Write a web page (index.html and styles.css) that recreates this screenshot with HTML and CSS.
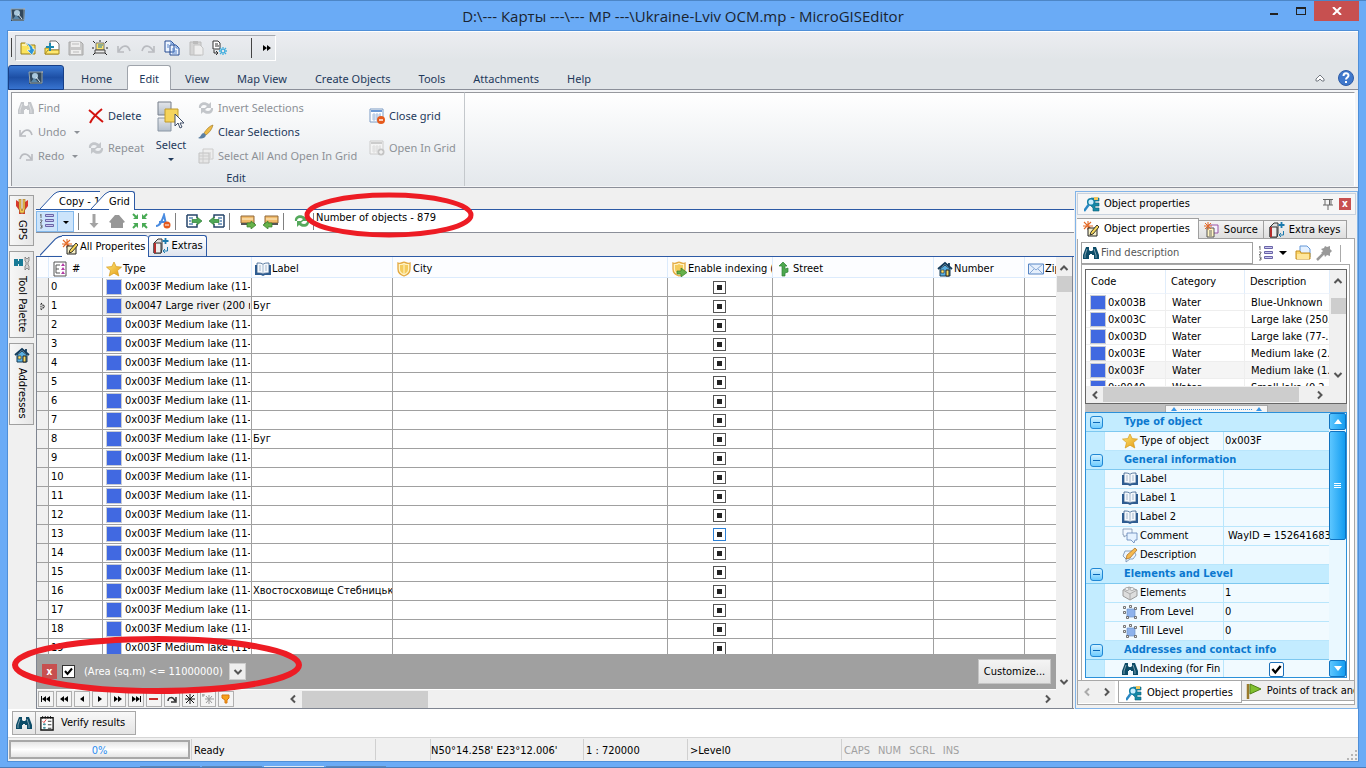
FILE: index.html
```html
<!DOCTYPE html>
<html lang="en">
<head>
<meta charset="utf-8">
<title>MicroGISEditor</title>
<link rel="stylesheet" href="styles.css">
</head>
<body>
<svg class="defs" aria-hidden="true">
  <defs>
    <linearGradient id="gold" x1="0" y1="0" x2="1" y2="1"><stop offset="0" stop-color="#ffe97a"/><stop offset="1" stop-color="#e39a12"/></linearGradient>
    <linearGradient id="sheet" x1="0" y1="0" x2="0" y2="1"><stop offset="0" stop-color="#e4e6ea"/><stop offset="1" stop-color="#b4bfcc"/></linearGradient>
  </defs>
  <symbol id="app" viewBox="0 0 16 16"><path d="M1 2h14l-1 12H1z" fill="#31485c"/><path d="M1 2h13v11H2z" fill="none" stroke="#95a5ae"/><circle cx="7" cy="6" r="3" fill="#a9c8dc"/><path d="M3 12l3-4 4 4z" fill="#5a88aa"/><path d="M8 7l4 5" stroke="#dbe9f1"/><path d="M13 2l2-1v2" fill="#aaa"/></symbol>
  <symbol id="folderdown" viewBox="0 0 16 16"><path d="M1 14V3h5l1 2h8v9z" fill="#fbe45d" stroke="#99801c"/><path d="M2 5h5" stroke="#fff"/><path d="M5 3c3 1 5 4 5 7H7l5 5 3-6h-2C13 6 9 3 5 3z" fill="#2a94d8" stroke="#fff" stroke-width=".6"/></symbol>
  <symbol id="folderadd" viewBox="0 0 16 16"><path d="M1 14V8h4l1-5h8v11z" fill="#fbe45d" stroke="#a98b20"/><path d="M6 1h6l3 3v6H6z" fill="#fff" stroke="#707070"/><path d="M1 14l3-4h11v4z" fill="#ffe970" stroke="#a98b20"/><path d="M6 3v8M2 7h8" stroke="#1b88ad" stroke-width="2"/></symbol>
  <symbol id="disk" viewBox="0 0 16 16"><path d="M1 2h12l2 2v11H1z" fill="#c8c8c8" stroke="#a8a8a8"/><path d="M3 2h9v5H3zM3 10h10v4H3z" fill="#eee"/><path d="M4 4h7M5 12h6" stroke="#bbb"/></symbol>
  <symbol id="alert" viewBox="0 0 16 16"><path d="M1 1l2 2M15 1l-2 2M0 8h2M14 8h2M1 15l2-2M15 15l-2-2M8 0v2" stroke="#222"/><path d="M4 3h8v7H4z" fill="#ffe66b" stroke="#777"/><path d="M6 5h5M6 7h4" stroke="#1c75b0"/><path d="M3 10h10v3H3z" fill="#e8e8e8" stroke="#444"/></symbol>
  <symbol id="undo" viewBox="0 0 16 16"><path d="M2 6v6h6M3 11c3-6 9-7 11 0" fill="none" stroke="#b9bbc0" stroke-width="1.6"/></symbol>
  <symbol id="redo" viewBox="0 0 16 16"><path d="M14 6v6H8M13 11C10 5 4 4 2 11" fill="none" stroke="#b9bbc0" stroke-width="1.6"/></symbol>
  <symbol id="copy" viewBox="0 0 16 16"><path d="M1 1h6l3 3v8H1zM6 5h6l3 3v7H6z" fill="#eef5ff" stroke="#244a92"/><path d="M7 1v3h3M12 5v3h3M3 5h2M3 7h2M8 9h3M8 11h5M8 13h5" fill="none" stroke="#5685ce"/></symbol>
  <symbol id="paste" viewBox="0 0 16 16"><path d="M2 2h11v13H2z" fill="#d5d5d5" stroke="#bbb"/><path d="M5 1h5v3H5z" fill="#bbb"/><path d="M6 5h6l3 3v7H6z" fill="#eee" stroke="#c4c4c4"/></symbol>
  <symbol id="docgear" viewBox="0 0 16 16"><path d="M1 1h5l2 2v6H1z" fill="#fff" stroke="#333"/><path d="M3 4h3M3 6h4M2 10v3h3M4 11l2 2-2 2" fill="none" stroke="#333"/><path d="M11 7v3M11 12v3M7 11h3M12 11h3M8 8l2 2M14 8l-2 2M8 14l2-2M14 14l-2-2" stroke="#43aede" stroke-width="1.3"/></symbol>
  <symbol id="binoc" viewBox="0 0 16 16"><path d="M3 2h3v3l1 1h2l1-1V2h3l3 8v4h-5v-4H9v-1H7v1H6v4H0v-4z" fill="currentColor"/><path d="M4 4L2 10v3M11 4l2 6v3" stroke="#fff" stroke-opacity=".45" fill="none"/></symbol>
  <symbol id="cross" viewBox="0 0 16 16"><path d="M1 2c5 4 9 8 14 12M14 1C9 5 5 9 2 15" fill="none" stroke="#d3130e" stroke-width="2"/></symbol>
  <symbol id="cycle" viewBox="0 0 16 16"><path d="M1 8C0 3 6 0 11 4l2-2v6H7l2-2C6 4 3 5 3 8zM15 8c1 5-5 8-10 4l-2 2V8h6l-2 2c3 2 6 1 6-2z" fill="currentColor"/></symbol>
  <symbol id="select" viewBox="0 0 28 32"><path d="M1 1h13v13H1z" fill="url(#sheet)" stroke="#777f8a"/><path d="M1 17h13v13H1z" fill="url(#sheet)" stroke="#8a96a4"/><path d="M8 8h13v13H8z" fill="#f5d45c" stroke="#c09a2c"/><path d="M18 13v12l3-3 2 5 2-1-2-4h4z" fill="#fff" stroke="#3e4d66"/></symbol>
  <symbol id="brush" viewBox="0 0 16 16"><path d="M15 1c-4 1-7 5-9 8l2 2c4-3 6-6 7-10z" fill="#eebb45" stroke="#9c7420" stroke-width=".6"/><path d="M6 9c-3 0-2 3-6 5 3 1 7 1 8-3z" fill="#5b7fa3"/></symbol>
  <symbol id="sheets" viewBox="0 0 16 16"><path d="M5 1h10v10H5z" fill="#eee" stroke="#ccc"/><path d="M1 5h10v10H1z" fill="#e6e6e6" stroke="#c2c2c2"/><path d="M1 8h10M1 11h10M5 5v10M12 4v6" stroke="#ccc"/></symbol>
  <symbol id="gridx" viewBox="0 0 16 16"><path d="M1 1h13v13H1z" fill="#fff" stroke="#7b9bc4"/><path d="M2 3h11" stroke="#6d9ad6" stroke-width="2"/><path d="M3 7h9M3 9h9M3 11h9M5 5v8M8 5v8M11 5v8" stroke="#a9c0e0"/><circle cx="12" cy="12" r="4" fill="#e65a1c"/><path d="M10 12h4" stroke="#fff" stroke-width="1.4"/></symbol>
  <symbol id="gridplus" viewBox="0 0 16 16"><path d="M1 1h13v13H1z" fill="#f4f4f4" stroke="#ccc"/><path d="M2 3h11" stroke="#ccc" stroke-width="2"/><path d="M3 7h9M3 9h9M3 11h9M5 5v8M8 5v8M11 5v8" stroke="#ddd"/><circle cx="12" cy="12" r="3.5" fill="#c4c4c4"/><path d="M10 12h4M12 10v4" stroke="#fff"/></symbol>
  <symbol id="help" viewBox="0 0 16 16"><circle cx="8" cy="8" r="7.5" fill="#3f78cc" stroke="#2e5ca6"/><path d="M5.5 6c0-3.500 5-3.500 5-.5 0 2-2.500 2-2.500 4M8 11v2" fill="none" stroke="#fff" stroke-width="2"/></symbol>
  <symbol id="numlist" viewBox="0 0 16 16"><path d="M2 1v4M1 2h1M1 7h2v1l-2 2h2M1 12h2v3H1M2 13.500h1" fill="none" stroke="#555" stroke-width=".8"/><path d="M6.500 1.500h8v2h-8zM6.500 6.500h8v2h-8zM6.500 11.500h8v2h-8z" fill="#c9c7ee" stroke="#6a64a8"/></symbol>
  <symbol id="arrowdn" viewBox="0 0 16 16"><path d="M6.500 1h3v9h3L8 15l-4.500-5h3z" fill="#a3a3a3"/></symbol>
  <symbol id="ghouse" viewBox="0 0 16 16"><path d="M0 9l6-7h4l6 7-2 1v5H2v-5z" fill="#979797"/></symbol>
  <symbol id="shrink" viewBox="0 0 16 16"><path d="M1 1l3 3M15 1l-3 3M1 15l3-3M15 15l-3-3" stroke="#48aa54" stroke-width="2"/><path d="M6 1v5H1zM10 1v5h5zM6 15v-5H1zM10 15v-5h5z" fill="#48aa54"/></symbol>
  <symbol id="aminus" viewBox="0 0 16 16"><path d="M1 13c4 0 6-5 8-11l2 9M4 9h6" fill="none" stroke="#4a8ce0" stroke-width="2"/><circle cx="12" cy="12" r="3.500" fill="#e65a1c"/><path d="M10 12h4" stroke="#fff"/></symbol>
  <symbol id="rowright" viewBox="0 0 16 16"><path d="M1 2h10v3M11 11v3H1M1 2v12" fill="none" stroke="#27466b" stroke-width="1.500"/><path d="M3 5h4M3 8h2M3 11h4" stroke="#5a86b4" stroke-width="1.500"/><path d="M6 6.500h5V4l5 4-5 4V9.500H6z" fill="#4ea956" stroke="#2f7d38" stroke-width=".7"/></symbol>
  <symbol id="truck" viewBox="0 0 16 16"><path d="M1 3h13v7H1z" fill="#f1bb6a" stroke="#90683a"/><path d="M1 10h14v2H1z" fill="#555"/><path d="M2 6h11" stroke="#fff1d1"/><path d="M7 10h4V8l5 4-5 4v-2H7z" fill="#66b14a" stroke="#34802a" stroke-width=".7"/></symbol>
  <symbol id="wand" viewBox="0 0 16 16"><path d="M5 0v9M0 5h10M1 1l7 7M8 1L1 8" stroke="#e46a26" stroke-width="1.100"/><path d="M5 7h9v8H5z" fill="#f6f0c8" stroke="#222"/><path d="M14 4l2 2-6 7-3 1 1-3z" fill="#f7d75b" stroke="#222" stroke-width=".9"/></symbol>
  <symbol id="bookplus" viewBox="0 0 16 16"><path d="M1 5l4-4h4v10l-1 4H1z" fill="#ddd" stroke="#333"/><path d="M1 5h7v10H1z" fill="#ececec" stroke="#333"/><path d="M2 5v10" stroke="#b52d2d" stroke-width="2"/><path d="M12.500 0v6M9.500 3h6" stroke="#1b7aae" stroke-width="1.800"/><path d="M14.500 9v4h-4M12 11l-2 2 2 2" fill="none" stroke="#1b7aae"/></symbol>
  <symbol id="tree" viewBox="0 0 16 16"><path d="M2 1h12v14H2z" fill="#fff" stroke="#555"/><path d="M8 4H4v8h4M4 8h3" fill="none" stroke="#555"/><path d="M11 2l2 3h-4zM11 6l2 3h-4zM11 10l2 3h-4z" fill="#b23aa5"/></symbol>
  <symbol id="star" viewBox="0 0 16 16"><path d="M8 1l2.200 4.600 5.300.5-4 3.500 1.300 5.400L8 12.200 3.200 15l1.300-5.400-4-3.500 5.300-.5z" fill="url(#gold)" stroke="#d59b1b" stroke-width=".7"/></symbol>
  <symbol id="book" viewBox="0 0 16 16"><path d="M0 4v10h6l2 1 2-1h6V4z" fill="#2d5c92"/><path d="M2 2c3 0 5 0 6 1.500C9 2 11 2 14 2v10c-3 0-5 0-6 1-1-1-3-1-6-1z" fill="#f5f8fc" stroke="#365e8c" stroke-width=".8"/><path d="M8 4v9M4 5h2M4 7h2M4 9h2M10 5h2M10 7h2M10 9h2" stroke="#8ea6c0" stroke-width=".8"/></symbol>
  <symbol id="shield" viewBox="0 0 16 16"><path d="M2 2c3 1 4 0 6-1 2 1 3 2 6 1v6c0 4-3 6-6 7-3-1-6-3-6-7z" fill="#fff3c4" stroke="#e3a83e" stroke-width="1.300"/><path d="M4 4c2 0 3 0 4-1 1 1 2 1 4 1v4c0 3-2 4-4 5-2-1-4-2-4-5z" fill="#f4cb5c"/><path d="M8 3v10" stroke="#fff6d0"/></symbol>
  <symbol id="shieldgo" viewBox="0 0 16 16"><path d="M2 2c3 1 4 0 6-1 2 1 3 2 6 1v6c0 4-3 6-6 7-3-1-6-3-6-7z" fill="#fff3c4" stroke="#e3a83e" stroke-width="1.300"/><path d="M4 4c2 0 3 0 4-1 1 1 2 1 4 1v4c0 3-2 4-4 5-2-1-4-2-4-5z" fill="#f4cb5c"/><path d="M6 10h4V7l6 4.500-6 4.500v-3H6z" fill="#66b14a" stroke="#34802a" stroke-width=".7"/></symbol>
  <symbol id="street" viewBox="0 0 16 16"><path d="M6 15V5H3l4-4 4 4H9v3l3-1v4l-3 1v3z" fill="#4da84f" stroke="#2f8137" stroke-width=".7"/></symbol>
  <symbol id="house" viewBox="0 0 16 16"><path d="M1 8l7-6 7 6M12 2v4" fill="none" stroke="#123a5a" stroke-width="1.800"/><path d="M3 8l5-4 5 4v7H3z" fill="#5aafe0" stroke="#173c56"/><path d="M4 9h3v3H4z" fill="#ffe873" stroke="#222" stroke-width=".6"/><path d="M9 9h3v6H9z" fill="#f7dc63" stroke="#222"/></symbol>
  <symbol id="mail" viewBox="0 0 16 16"><path d="M.5 3h15v10H.5z" fill="#e5effc" stroke="#5685c4"/><path d="M1 3l7 6 7-6M1 13l5-5M15 13l-5-5" fill="none" stroke="#86a8d6"/></symbol>
  <symbol id="props" viewBox="0 0 16 16"><path d="M7 2h8v3h-4v2h4v3h-4v2h4v3H9v-3l-3-3V4z" fill="#158aa5" stroke="#0f6078" stroke-width=".6"/><circle cx="7" cy="6" r="3.300" fill="#cbefff" stroke="#1380a4" stroke-width="1.500"/><path d="M4.500 9L0 15" stroke="#2a88c4" stroke-width="2.500"/><path d="M10 1h4v3h-4z" fill="#f2c75c"/></symbol>
  <symbol id="source" viewBox="0 0 16 16"><path d="M5 3h10v8H5z" fill="#f5f2ff" stroke="#9b54a4"/><path d="M4 6h7v9H4z" fill="#fff5c3" stroke="#555"/><path d="M6 9h3M6 11h3M6 13h3" stroke="#666"/><path d="M5 0v8M1 4h8M2 1l6 6M8 1L2 7" stroke="#e46a26"/></symbol>
  <symbol id="opendoc" viewBox="0 0 16 16"><path d="M5 1h7l3 3v8H5z" fill="#e5f1ff" stroke="#6598d8"/><path d="M1 14V6h4l1 2h9v6z" fill="#fbd466" stroke="#c48d20"/><path d="M2 9h12v5H2z" fill="#ffe69a"/></symbol>
  <symbol id="pipette" viewBox="0 0 16 16"><path d="M1 15l7-7" stroke="#999" stroke-width="2.500"/><path d="M5 4l3-1 1-2 2 1 3-1v3l2 2-2 2v3l-3-1-2 2-1-3-3-1 2-2z" fill="#999"/></symbol>
  <symbol id="pin" viewBox="0 0 12 12"><path d="M1 1.500h10M3 2v5M9 2v5M7.500 2v5M1 7h10M6 7v5" fill="none" stroke="#666"/></symbol>
  <symbol id="bubble" viewBox="0 0 16 16"><path d="M1 1h9v6H5L2 9V7H1z" fill="#f2f8ff" stroke="#7d93ae" stroke-width=".8"/><path d="M5 5h10v7h-2l-1 3-3-3H5z" fill="#e5f2ff" stroke="#5f84b8" stroke-width=".8"/></symbol>
  <symbol id="note" viewBox="0 0 16 16"><path d="M3 4h9l2 4-3 4H8l-4 3v-3L1 9z" fill="#edf5ff" stroke="#6f8db3" stroke-width=".8"/><path d="M13 1l2 2-7 8-4 1 1-4z" fill="#f6b94f" stroke="#a1681e" stroke-width=".7"/></symbol>
  <symbol id="brick" viewBox="0 0 16 16"><path d="M1 5l6-3 8 3v6l-7 4-7-4z" fill="#ddd" stroke="#999"/><path d="M1 5l7 4 7-4M8 9v6" fill="none" stroke="#aaa"/><ellipse cx="5" cy="4" rx="2" ry="1.500" fill="#f5f5f5" stroke="#999" stroke-width=".7"/><ellipse cx="10" cy="4" rx="2" ry="1.500" fill="#f5f5f5" stroke="#999" stroke-width=".7"/></symbol>
  <symbol id="level" viewBox="0 0 16 16"><path d="M5 5h8v8H5z" fill="#8eb2ec" stroke="#6f92c8" stroke-width=".7"/><path d="M1.500 2.500h2v2h-2zM7.500 1.500h2v2h-2zM12.500 3.500h2v2h-2zM1.500 7.500h2v2h-2zM4.500 12.500h2v2h-2zM12.500 12.500h2v2h-2z" fill="#eee" stroke="#555" stroke-width=".8"/></symbol>
  <symbol id="flag" viewBox="0 0 16 16"><path d="M2 1v15" stroke="#9a7a2c" stroke-width="2.500"/><path d="M4 1l11 5-11 5z" fill="#80c02e" stroke="#518216"/></symbol>
  <symbol id="checklist" viewBox="0 0 16 18"><path d="M1 3h14v14H1z" fill="#fff" stroke="#111" stroke-width="1.500"/><path d="M3 1v3M6 1v3M9 1v3M12 1v3" stroke="#111"/><path d="M3 7l1.500 1.500L7 5" fill="none" stroke="#d22"/><path d="M4 10h2v1H4zM4 14h2v1H4z" stroke="#278" fill="none"/><path d="M9 7h4M9 11h4M9 15h4" stroke="#222"/></symbol>
  <symbol id="gps" viewBox="0 0 12 16"><path d="M0 1l3 2v6l3 6 3-6V3l3-2v6l-3 4v4H3v-4L0 7z" fill="#d9382c"/><path d="M3 0h2v9l1 3 1-3V0h2v9l-1 5H4L3 9z" fill="#f4cb54" stroke="#96611e" stroke-width=".6"/></symbol>
  <symbol id="palette" viewBox="0 0 16 16"><path d="M0 4h4v2h1V4h4v7H5V9H4v2H0z" fill="#187a96"/><path d="M11 2l2 2 2-2v4l-1 1v3l1 1v4l-2-2-2 2v-4l1-1V7l-1-1z" fill="#d4d4d4" stroke="#777" stroke-width=".8"/></symbol>
  <symbol id="chevl" viewBox="0 0 8 10"><path d="M6 1.500L2.500 5 6 8.500" fill="none" stroke="currentColor" stroke-width="2"/></symbol>
  <symbol id="chevr" viewBox="0 0 8 10"><path d="M2 1.500L5.500 5 2 8.500" fill="none" stroke="currentColor" stroke-width="2"/></symbol>
  <symbol id="chevu" viewBox="0 0 10 8"><path d="M1.500 6L5 2.500 8.500 6" fill="none" stroke="currentColor" stroke-width="2"/></symbol>
  <symbol id="chevd" viewBox="0 0 10 8"><path d="M1.500 2L5 5.500 8.500 2" fill="none" stroke="currentColor" stroke-width="2"/></symbol>
  <symbol id="slope" viewBox="0 0 20 18"><path d="M0 18L14 3Q17 .5 20 .5V18z" fill="#fff"/><path d="M0 18L14 3Q17 .5 20 .5" fill="none" stroke="#2d5aa5"/></symbol>
</svg>

<div class="window">
  <header class="titlebar">
    <svg class="i16 logo"><use href="#app"/></svg>
    <h1>D:\--- Карты ---\--- MP ---\Ukraine-Lviv OCM.mp - MicroGISEditor</h1>
    <div class="winbtns">
      <button class="min" aria-label="Minimize"><i></i></button>
      <button class="max" aria-label="Maximize"><i></i></button>
      <button class="close" aria-label="Close"><svg width="10" height="8" viewBox="0 0 10 8"><path d="M1 0l8 8M9 0L1 8" stroke="#fff" stroke-width="2"/></svg></button>
    </div>
  </header>

  <div class="client">
    <div class="ribbonhead">
      <div class="qat">
        <span class="grip"></span>
        <div class="qatbox">
          <button aria-label="Open map"><svg class="i16"><use href="#folderdown"/></svg></button>
          <button aria-label="Add map"><svg class="i16"><use href="#folderadd"/></svg></button>
          <button aria-label="Save"><svg class="i16"><use href="#disk"/></svg></button>
          <button aria-label="Alerts"><svg class="i16"><use href="#alert"/></svg></button>
          <button aria-label="Undo"><svg class="i16"><use href="#undo"/></svg></button>
          <button aria-label="Redo"><svg class="i16"><use href="#redo"/></svg></button>
          <button aria-label="Copy"><svg class="i16"><use href="#copy"/></svg></button>
          <button aria-label="Paste"><svg class="i16"><use href="#paste"/></svg></button>
          <button aria-label="Convert"><svg class="i16"><use href="#docgear"/></svg></button>
          <span class="grip end"></span>
          <button class="more" aria-label="More"><svg width="8" height="6"><path d="M0 0l4 3-4 3zM4 0l4 3-4 3z"/></svg></button>
        </div>
      </div>
      <nav class="rtabs">
        <button class="appbtn" aria-label="Application menu"><svg class="i16"><use href="#app"/></svg></button>
        <button class="first">Home</button><button class="on">Edit</button><button>View</button><button>Map View</button><button>Create Objects</button><button>Tools</button><button>Attachments</button><button>Help</button>
        <span class="grow"></span>
        <button class="ric" aria-label="Collapse ribbon"><svg width="10" height="8" viewBox="0 0 10 8"><path d="M1 5l4-4 4 4v2H7L5 5 3 7H1z" fill="#fff" stroke="#777c84"/></svg></button>
        <button class="ric" aria-label="Help"><svg class="i16"><use href="#help"/></svg></button>
      </nav>
    </div>

    <section class="ribbon">
      <div class="group">
        <div class="cols">
          <div class="col c1">
            <button disabled><svg class="i16 dimic"><use href="#binoc"/></svg>Find</button>
            <button disabled><svg class="i16"><use href="#undo"/></svg>Undo<i class="tri"></i></button>
            <button disabled><svg class="i16"><use href="#redo"/></svg>Redo<i class="tri"></i></button>
          </div>
          <div class="col two c2">
            <button><svg class="i16"><use href="#cross"/></svg>Delete</button>
            <button disabled><svg class="i16 dimic"><use href="#cycle"/></svg>Repeat</button>
          </div>
          <button class="big"><svg width="28" height="32"><use href="#select"/></svg><span>Select</span><i class="tri"></i></button>
          <div class="col c3">
            <button disabled><svg class="i16 dimic"><use href="#cycle"/></svg>Invert Selections</button>
            <button><svg class="i16"><use href="#brush"/></svg>Clear Selections</button>
            <button disabled><svg class="i16"><use href="#sheets"/></svg>Select All And Open In Grid</button>
          </div>
          <div class="col two c4">
            <button><svg class="i16"><use href="#gridx"/></svg>Close grid</button>
            <button disabled><svg class="i16"><use href="#gridplus"/></svg>Open In Grid</button>
          </div>
        </div>
        <p class="caption">Edit</p>
      </div>
    </section>

    <main class="work">
      <aside class="dock">
        <button><svg width="12" height="16"><use href="#gps"/></svg>GPS</button>
        <button><svg class="i16"><use href="#palette"/></svg>Tool Palette</button>
        <button><svg class="i16"><use href="#house"/></svg>Addresses</button>
      </aside>

      <section class="center">
        <div class="doctabs">
          <button class="st copytab"><svg class="slope"><use href="#slope"/></svg><span>Copy - 1</span></button>
          <button class="st gridtab on"><svg class="slope"><use href="#slope"/></svg><span>Grid</span></button>
        </div>
        <div class="gtool">
          <button class="split" aria-label="Numbering"><svg class="i16"><use href="#numlist"/></svg></button>
          <button class="split drop" aria-label="Numbering options"><i class="tri"></i></button>
          <span class="sep"></span>
          <button aria-label="Sort"><svg class="i16"><use href="#arrowdn"/></svg></button>
          <button aria-label="Home"><svg class="i16"><use href="#ghouse"/></svg></button>
          <button aria-label="Fit"><svg class="i16"><use href="#shrink"/></svg></button>
          <button aria-label="Clear format"><svg class="i16"><use href="#aminus"/></svg></button>
          <span class="sep"></span>
          <button class="wide" aria-label="Export"><svg class="i16"><use href="#rowright"/></svg></button>
          <button aria-label="Import"><svg class="i16 flip"><use href="#rowright"/></svg></button>
          <span class="sep"></span>
          <button class="wide" aria-label="Send"><svg class="i16"><use href="#truck"/></svg></button>
          <button aria-label="Receive"><svg class="i16 flip"><use href="#truck"/></svg></button>
          <span class="sep"></span>
          <button class="wide" aria-label="Refresh"><svg class="i16 green"><use href="#cycle"/></svg></button>
          <span class="sep tight"></span>
          <span class="count">Number of objects - 879
            <svg class="mark m1" viewBox="0 0 172 46"><ellipse cx="86" cy="23" rx="82" ry="20" fill="none" stroke="#ed1c24" stroke-width="5"/></svg>
          </span>
        </div>
        <div class="viewtabs">
          <button class="st alltab on"><svg class="slope"><use href="#slope"/></svg><span><svg class="i16"><use href="#wand"/></svg>All Properites</span></button>
          <button class="extras"><svg class="i16"><use href="#bookplus"/></svg>Extras</button>
        </div>
        <div class="gridwrap">
          <div class="gridmain">
            <div class="gridclip">
              <table class="grid">
                <colgroup><col class="w0"><col class="w1"><col class="w2"><col class="w3"><col class="w4"><col class="w5"><col class="w6"><col class="w7"><col></colgroup>
                <thead><tr>
                  <th></th>
                  <th class="h1"><div><svg class="i16"><use href="#tree"/></svg>#</div></th>
                  <th><div><svg class="i16"><use href="#star"/></svg>Type</div></th>
                  <th><div><svg class="i16"><use href="#book"/></svg>Label</div></th>
                  <th><div><svg class="i16"><use href="#shield"/></svg>City</div></th>
                  <th><div><svg class="i16"><use href="#shieldgo"/></svg>Enable indexing (</div></th>
                  <th><div><svg class="i16"><use href="#street"/></svg>Street</div></th>
                  <th><div><svg class="i16"><use href="#house"/></svg>Number</div></th>
                  <th><div><svg class="i16"><use href="#mail"/></svg>Zip</div></th>
                </tr></thead>
                <tbody id="rows"></tbody>
              </table>
            </div>
            <div class="filter">
              <button class="fx" aria-label="Close filter">x</button>
              <input type="checkbox" id="flt" checked>
              <label for="flt">(Area (sq.m) &lt;= 11000000)</label>
              <button class="fd" aria-label="Filter history"><svg width="10" height="8"><use href="#chevd"/></svg></button>
              <span class="grow"></span>
              <button class="cust">Customize...</button>
              <svg class="mark m2" viewBox="0 0 292 60"><ellipse cx="146" cy="30" rx="142" ry="26" fill="none" stroke="#ed1c24" stroke-width="6"/></svg>
            </div>
            <div class="navrow">
              <button aria-label="First"><svg width="12" height="10" viewBox="0 0 12 10"><path d="M1 2h1v6H1zM6 2v6L2 5zM10 2v6L6 5z"/></svg></button>
              <button aria-label="Previous page"><svg width="12" height="10" viewBox="0 0 12 10"><path d="M6 2v6L2 5zM10 2v6L6 5z"/></svg></button>
              <button aria-label="Previous"><svg width="12" height="10" viewBox="0 0 12 10"><path d="M8 2v6L4 5z"/></svg></button>
              <button aria-label="Next"><svg width="12" height="10" viewBox="0 0 12 10"><path d="M4 2v6l4-3z"/></svg></button>
              <button aria-label="Next page"><svg width="12" height="10" viewBox="0 0 12 10"><path d="M2 2v6l4-3zM6 2v6l4-3z"/></svg></button>
              <button aria-label="Last"><svg width="12" height="10" viewBox="0 0 12 10"><path d="M2 2v6l4-3zM6 2v6l4-3zM10 2h1v6h-1z"/></svg></button>
              <button aria-label="Delete"><svg width="12" height="10" viewBox="0 0 12 10"><path d="M1 4h9v2H1z" fill="#c92b2b"/></svg></button>
              <button aria-label="Repeat"><svg width="12" height="10" viewBox="0 0 12 10"><path d="M2 7c0-4 5-5 7 0M10 3v5H5" fill="none" stroke="#333" stroke-width="1.500"/></svg></button>
              <button aria-label="Mark"><svg width="12" height="10" viewBox="0 0 12 10"><path d="M6 0v10M1 5h10M2 1l8 8M10 1L2 9" stroke="#111"/></svg></button>
              <button class="off" aria-label="Go to mark"><svg width="12" height="10" viewBox="0 0 12 10"><path d="M7 1v9M3 5h9M4 2l6 7M10 2L4 9M1 0v3M0 1h3" stroke="#999"/></svg></button>
              <button aria-label="Filter"><svg width="12" height="10" viewBox="0 0 12 10"><path d="M2 1h7v3L7 6v3H5V6L2 4z" fill="#f6a11b" stroke="#d9760c"/></svg></button>
              <div class="hscroll">
                <svg width="8" height="10"><use href="#chevl"/></svg><span class="thumb"></span><span class="grow"></span><svg width="8" height="10"><use href="#chevr"/></svg>
              </div>
            </div>
          </div>
          <div class="vscroll"><svg width="10" height="8"><use href="#chevu"/></svg><span class="thumb"></span><span class="grow"></span><svg width="10" height="8"><use href="#chevd"/></svg></div>
        </div>
      </section>

      <aside class="panel">
        <div class="ptitle"><svg class="i16"><use href="#props"/></svg><h2>Object properties</h2><svg width="12" height="12"><use href="#pin"/></svg><button class="fx" aria-label="Close panel">x</button></div>
        <div class="ptabs">
          <button class="on"><svg class="i16"><use href="#wand"/></svg>Object properties</button><button><svg class="i16"><use href="#source"/></svg>Source</button><button><svg class="i16"><use href="#bookplus"/></svg>Extra keys</button>
        </div>
        <div class="pbody">
          <div class="search">
            <label class="sbox"><svg class="i16 teal"><use href="#binoc"/></svg><input type="text" placeholder="Find description" aria-label="Find description"></label>
            <button aria-label="View"><svg class="i16"><use href="#numlist"/></svg></button>
            <button aria-label="View options"><i class="tri"></i></button>
            <button aria-label="Open"><svg class="i16"><use href="#opendoc"/></svg></button>
            <button aria-label="Pick"><svg class="i16"><use href="#pipette"/></svg></button>
            <span class="sep"></span>
          </div>
          <div class="plist">
            <div class="listbox">
              <div class="listrow">
                <div class="listclip">
                  <table class="codes">
                    <colgroup><col class="k1"><col class="k2"><col></colgroup>
                    <thead><tr><th>Code</th><th>Category</th><th>Description</th></tr></thead>
                    <tbody>
                      <tr><td><i class="sw"></i>0x003B</td><td>Water</td><td>Blue-Unknown</td></tr>
                      <tr><td><i class="sw"></i>0x003C</td><td>Water</td><td>Large lake (250...</td></tr>
                      <tr><td><i class="sw"></i>0x003D</td><td>Water</td><td>Large lake (77-...</td></tr>
                      <tr><td><i class="sw"></i>0x003E</td><td>Water</td><td>Medium lake (2...</td></tr>
                      <tr class="cur"><td><i class="sw"></i>0x003F</td><td>Water</td><td>Medium lake (1...</td></tr>
                      <tr><td><i class="sw"></i>0x0040</td><td>Water</td><td>Small lake (0.2...</td></tr>
                    </tbody>
                  </table>
                </div>
                <div class="vscroll"><svg width="10" height="8"><use href="#chevu"/></svg><span class="thumb"></span><span class="grow"></span><svg width="10" height="8"><use href="#chevd"/></svg></div>
              </div>
              <div class="hscroll"><svg width="8" height="10"><use href="#chevl"/></svg><span class="thumb"></span><span class="grow"></span><svg width="8" height="10"><use href="#chevr"/></svg></div>
            </div>
            <div class="splitter"><span><svg width="6" height="4"><path d="M0 4l3-4 3 4z" fill="#3c97e6"/></svg><i></i><svg width="6" height="4"><path d="M0 4l3-4 3 4z" fill="#3c97e6"/></svg></span></div>
            <div class="pgrid">
              <div class="prows">
                <div class="cat"><button aria-label="Collapse"></button><b>Type of object</b></div>
                <div class="pr"><span class="n"><svg class="i16"><use href="#star"/></svg>Type of object</span><span class="v">0x003F</span></div>
                <div class="cat"><button aria-label="Collapse"></button><b>General information</b></div>
                <div class="pr"><span class="n"><svg class="i16"><use href="#book"/></svg>Label</span><span class="v"></span></div>
                <div class="pr"><span class="n"><svg class="i16"><use href="#book"/></svg>Label 1</span><span class="v"></span></div>
                <div class="pr"><span class="n"><svg class="i16"><use href="#book"/></svg>Label 2</span><span class="v"></span></div>
                <div class="pr"><span class="n"><svg class="i16"><use href="#bubble"/></svg>Comment</span><span class="v in">WayID = 152641683</span></div>
                <div class="pr"><span class="n"><svg class="i16"><use href="#note"/></svg>Description</span><span class="v"></span></div>
                <div class="cat"><button aria-label="Collapse"></button><b>Elements and Level</b></div>
                <div class="pr"><span class="n"><svg class="i16"><use href="#brick"/></svg>Elements</span><span class="v">1</span></div>
                <div class="pr"><span class="n"><svg class="i16"><use href="#level"/></svg>From Level</span><span class="v">0</span></div>
                <div class="pr"><span class="n"><svg class="i16"><use href="#level"/></svg>Till Level</span><span class="v">0</span></div>
                <div class="cat"><button aria-label="Collapse"></button><b>Addresses and contact info</b></div>
                <div class="pr"><label class="n" for="idx"><svg class="i16 teal"><use href="#binoc"/></svg>Indexing (for Fin</label><span class="v mid"><input type="checkbox" id="idx" checked></span></div>
              </div>
              <div class="bscroll">
                <button aria-label="Scroll up"><svg width="8" height="5"><path d="M0 5l4-5 4 5z" fill="#fff"/></svg></button>
                <span class="bthumb"><i></i></span>
                <span class="grow"></span>
                <button aria-label="Scroll down"><svg width="8" height="5"><path d="M0 0l4 5 4-5z" fill="#fff"/></svg></button>
              </div>
            </div>
          </div>
          <div class="btabs">
            <button class="arr dim" aria-label="Previous tab"><svg width="8" height="10"><use href="#chevl"/></svg></button>
            <button class="arr" aria-label="Next tab"><svg width="8" height="10"><use href="#chevr"/></svg></button>
            <button class="bt on"><svg class="i16"><use href="#props"/></svg>Object properties</button>
            <button class="bt"><svg class="i16"><use href="#flag"/></svg>Points of track and</button>
          </div>
        </div>
      </aside>
    </main>

    <div class="results">
      <button aria-label="Search results"><svg class="i16 teal"><use href="#binoc"/></svg></button>
      <button><svg width="14" height="16"><use href="#checklist"/></svg>Verify results</button>
    </div>

    <footer class="status">
      <div class="prog" role="progressbar" aria-label="Progress">0%</div>
      <span class="s1">Ready</span><span class="s2"></span><span class="s3">N50°14.258' E23°12.006'</span><span class="s4">1 : 720000</span><span class="s5">&gt;Level0</span>
      <span class="keys"><em>CAPS</em><em>NUM</em><em>SCRL</em><em>INS</em></span>
      <svg class="sizer" width="12" height="12"><path d="M9 9h2v2H9zM5 9h2v2H5zM9 5h2v2H9zM1 9h2v2H1zM5 5h2v2H5zM9 1h2v2H9z" fill="#b5b5b5"/></svg>
    </footer>
  </div>
  <div class="taskbar"><i></i><i></i><i class="act"></i><i></i></div>
</div>
<script src="app.js"></script>
</body>
</html>
```

FILE: styles.css
```css
* { box-sizing: border-box; }
body {
  margin: 0;
  font: 11px/14px "DejaVu Sans Condensed", "DejaVu Sans", Tahoma, sans-serif;
  color: #000;
}
button { font: inherit; color: inherit; background: none; border: 0; padding: 0; margin: 0; white-space: nowrap; }
input { font: inherit; margin: 0; }
svg { flex: none; display: block; }
h1, h2, p { margin: 0; font-weight: normal; }
.defs { position: absolute; width: 0; height: 0; }
.i16 { width: 16px; height: 16px; }
.grow { flex: 1; }
.flip { transform: scaleX(-1); }
.dimic { color: #c3c6ca; }
.green { color: #55a95c; }
.teal { color: #0c4c68; }
.tri { display: inline-block; border: 3px solid transparent; border-top-color: currentColor; border-bottom: 0; }

.window { height: 100vh; display: flex; flex-direction: column; background: #6aabf6; border-top: 1px solid #4d86c6; overflow: hidden; }
.titlebar { flex: none; height: 29px; display: flex; align-items: center; justify-content: center; position: relative; }
.titlebar .logo { position: absolute; left: 10px; top: 6px; }
.titlebar h1 { font: 15px/20px "Open Sans", "Noto Sans", sans-serif; color: #1a2430; }
.winbtns { position: absolute; right: 7px; top: 0; display: flex; height: 20px; }
.winbtns button { width: 27px; display: flex; align-items: center; justify-content: center; }
.winbtns .close { width: 45px; background: #c75050; }
.min i { width: 8px; height: 2px; background: #222; margin-top: 6px; }
.max i { width: 10px; height: 8px; border: 1px solid #222; border-top-width: 2px; }

.client { flex: 1; min-height: 0; margin: 0 7px; border: 1px solid #4f8fd8; display: flex; flex-direction: column; background: #fff; }

.ribbonhead { flex: none; background: linear-gradient(#ecedf1, #e1e5e8 50%, #e1e5e8); border-top: 1px solid #fff; border-bottom: 1px solid #8b8f99; }
.qat { display: flex; height: 33px; padding: 3px 0 4px 3px; }
.grip { width: 1px; background: #444; margin: 3px 3px 4px 0; }
.qatbox { display: flex; align-items: center; gap: 8px; border: 1px solid #a5a9af; border-right-color: #fff; border-bottom-color: #fff; padding: 0 4px; width: 261px; }
.qatbox .end { align-self: stretch; margin: 2px 3px 2px auto; }
.more { padding-right: 0; }
.rtabs { display: flex; height: 25px; margin-bottom: -1px; font: 11px/14px "Noto Sans", "Open Sans", sans-serif; color: #1e395b; align-items: stretch; }
.rtabs button { padding: 2px 13px 0; border: 1px solid transparent; border-bottom: 0; display: flex; align-items: center; }
.rtabs .first { padding: 2px 14px 0 16px; }
.rtabs .on { background: #fff; border-color: #9fa4ab; border-radius: 3px 3px 0 0; padding: 2px 11px 0; }
.rtabs .appbtn { width: 56px; justify-content: center; padding: 0; background: linear-gradient(#3a78d2, #1d4fa5 50%, #3874d0); border: 1px solid #173f87; border-radius: 3px 3px 0 0; }
.rtabs .ric { padding: 0; margin-right: 11px; }
.rtabs .ric:last-child { margin-right: 3px; }

.ribbon { flex: none; height: 98px; border-bottom: 1px solid #8b8f99; padding: 2px 3px 1px; font: 11px/14px "Noto Sans", "Open Sans", sans-serif; color: #1e395b; display: flex; background: #f4f5f7; }
.ribbon::after { content: ""; flex: 1; border-top: 1px solid #97999e; background: linear-gradient(#fff, #e4e8ec); border-right: 1px solid #fff; }
.group { width: 454px; border: 1px solid #97999e; border-right-color: #c4c8cc; border-bottom: 0; background: linear-gradient(#fff, #e4e8ec); }
.cols { display: flex; height: 78px; padding: 3px 0 0 6px; }
.col { display: flex; flex-direction: column; }
.col button { display: flex; align-items: center; height: 24px; gap: 4px; }
.col.two { padding-top: 8px; gap: 8px; }
.col .tri { margin-left: 4px; }
.c1 { width: 70px; }
.c2 { width: 61px; }
.c3 { width: 171px; }
.ribbon button:disabled { color: #8d9197; }
.big { width: 49px; padding-right: 5px; display: flex; flex-direction: column; align-items: center; padding-top: 5px; }
.big span { margin-top: 5px; }
.big .tri { margin-top: 6px; }
.caption { text-align: center; padding-right: 4px; }

.work { flex: 1; min-height: 0; display: flex; background: #f0f0f0; padding-top: 3px; }
.dock { width: 28px; padding: 4px 2px 0 1px; display: flex; flex-direction: column; gap: 5px; flex: none; }
.dock button { writing-mode: vertical-rl; display: flex; align-items: center; gap: 5px; border: 1px solid #a0a0a0; background: linear-gradient(90deg, #f7f7f7, #e6e6e6); padding: 3px 0 5px; width: 25px; }

.center { flex: 1; min-width: 0; display: flex; flex-direction: column; border-bottom: 1px solid #7f8591; }
.doctabs, .viewtabs { display: flex; flex: none; border-bottom: 1px solid #2d5aa5; padding-left: 4px; }
.doctabs { height: 19px; }
.st { display: flex; height: 18px; }
.st .slope { width: 20px; height: 18px; }
.st > span { border-top: 1px solid #2d5aa5; height: 18px; line-height: 20px; background: #fff; }
.st.on { height: 19px; }
.st.on > span { height: 19px; border-right: 1px solid #2d5aa5; border-radius: 0 3px 0 0; }
.copytab { width: 64px; overflow: hidden; }
.copytab > span { margin-left: -1px; }
.gridtab { margin-left: -13px; position: relative; }
.gridtab > span { padding-right: 4px; margin-left: -2px; }
.gtool { flex: none; height: 23px; background: #fff; border-bottom: 1px solid #8b8f99; display: flex; align-items: center; gap: 7px; }
.gtool .split { height: 21px; background: #cce4fb; border: 1px solid #82b8ec; width: 22px; padding: 0 2px; margin-right: -7px; flex: none; }
.gtool .drop { width: 16px; margin-right: 0; border-left: 0; padding: 0 4px; }
.gtool .wide { margin-left: 3px; }
.sep { width: 1px; height: 17px; background: #808080; margin-left: -3px; }
.sep.tight { margin: 0 -5px 0 -4px; }
.count { position: relative; align-self: flex-start; padding-top: 1px; }
.mark { position: absolute; pointer-events: none; z-index: 2; }
.m1 { width: 172px; height: 46px; left: -13px; top: -18px; }
.viewtabs { height: 24px; padding-top: 2px; background: #f0f0f0; }
.viewtabs .slope { width: 22px; height: 21px; }
.viewtabs .st > span { display: flex; align-items: center; gap: 2px; height: 22px; border-right: 0; padding-right: 3px; }
.viewtabs .st { height: 22px; }
.extras { display: flex; align-items: center; gap: 2px; height: 21px; border: 1px solid #2d5aa5; border-bottom: 0; border-radius: 3px 3px 0 0; padding: 0 3px 0 4px; background: linear-gradient(#fff, #dfe4ee); }
.gridwrap { flex: 1; min-height: 0; display: flex; border-right: 1px solid #7f8591; border-left: 1px solid #7f8591; margin-right: 1px; background: #f0f0f0; }
.gridmain { flex: 1; min-width: 0; display: flex; flex-direction: column; }
.gridclip { flex: 1; min-height: 0; overflow: hidden; background: #fff; }
.grid { width: 100%; table-layout: fixed; border-collapse: separate; border-spacing: 0; }
.w0 { width: 12px; } .w1 { width: 54px; } .w2 { width: 149px; } .w3 { width: 141px; } .w4 { width: 275px; } .w5 { width: 105px; } .w6 { width: 161px; } .w7 { width: 91px; }
.grid th { height: 21px; padding: 3px 0 0 3px; border-right: 1px solid #dcebfc; border-bottom: 1px solid #dcebfc; font-weight: normal; background: #fcfdff; }
.grid th div { display: flex; align-items: center; gap: 1px; overflow: hidden; white-space: nowrap; }
.grid .h1 div { gap: 4px; }
.grid td { height: 19px; padding: 0 0 0 2px; border-right: 1px solid #a0a0a0; border-bottom: 1px solid #a0a0a0; overflow: hidden; white-space: nowrap; line-height: 16px; }
.grid td:nth-child(4) { padding-left: 1px; }
.grid th:last-child, .grid td:last-child { border-right: 0; }
.grid td:first-child { background: #f0f0f0; }
.grid td.type { padding: 0 1px 0 3px; }
.grid td.type div { display: flex; align-items: center; gap: 3px; overflow: hidden; }
.grid .current td.type { background: #f0f0f0; }
.grid td.ck { text-align: center; padding: 0 2px 0 0; }
.sw { display: inline-block; flex: none; width: 16px; height: 16px; background: #4169e1; border: 1px solid #c8ccd4; }
.tri3 { appearance: none; width: 13px; height: 13px; border: 1px solid #555; display: block; margin: 0 auto; background: linear-gradient(#222, #222) center / 5px 5px no-repeat #fff; }
.tri3.hot { border-color: #2a7fd5; }

.filter { flex: none; height: 35px; background: #a0a0a0; display: flex; align-items: center; padding: 0 5px; position: relative; color: #fff; }
.fx { width: 15px; height: 15px; line-height: 13px; background: #c75050; color: #fff; font-weight: bold; font-size: 10px; text-align: center; flex: none; }
.filter input, .v input { appearance: none; width: 13px; height: 13px; border: 1px solid #333; background: #fff url('data:image/svg+xml,<svg xmlns="http://www.w3.org/2000/svg" viewBox="0 0 11 11"><path d="M2 5l2.500 3L9 2.500" fill="none" stroke="black" stroke-width="2"/></svg>'); }
.filter input { margin: 0 9px 0 5px; }
.fd { width: 17px; height: 17px; margin-left: 6px; background: #eee; border: 1px solid #ccc; color: #555; padding: 0 3px; }
.cust { height: 25px; border: 1px solid #c4c4c4; background: linear-gradient(#f4f4f4, #e2e2e2); color: #000; padding: 0 4px; width: 73px; }
.m2 { width: 292px; height: 60px; left: -26px; top: -19px; }
.navrow { flex: none; height: 19px; display: flex; align-items: center; gap: 2px; padding-left: 1px; border-top: 1px solid #fff; }
.navrow button { width: 16px; height: 16px; border: 1px solid #b0b0b0; background: #f4f4f4; padding: 0 1px; }
.hscroll, .vscroll { display: flex; align-items: center; background: #f0f0f0; color: #555; }
.hscroll .thumb, .vscroll .thumb { background: #cdcdcd; }
.navrow .hscroll { flex: 1; height: 17px; margin-left: 53px; padding-right: 4px; }
.navrow .thumb { width: 126px; height: 17px; margin-left: 5px; }
.vscroll { flex-direction: column; width: 16px; padding: 7px 0; }
.center .vscroll { padding-bottom: 22px; }
.vscroll .thumb { width: 15px; height: 16px; margin-top: 4px; }

.panel { width: 283px; flex: none; border: 1px solid #82b4e8; margin-left: 1px; padding: 1px; display: flex; flex-direction: column; }
.ptitle { height: 22px; display: flex; align-items: center; gap: 4px; border: 1px solid #c8d2de; background: #f6f6f6; padding: 0 4px 0 6px; flex: none; }
.ptitle h2 { font-size: 11px; flex: 1; }
.ptitle .fx { width: 12px; height: 12px; line-height: 10px; margin-left: 1px; }
.ptabs { flex: none; display: flex; align-items: flex-end; height: 24px; position: relative; z-index: 1; }
.ptabs button { height: 19px; border: 1px solid #a0a0a0; border-left: 0; background: linear-gradient(#f4f4f4, #dedede); display: flex; align-items: center; gap: 4px; padding: 0 4px; }
.ptabs button + button { gap: 5px; padding-right: 5px; }
.ptabs button:last-child { gap: 4px; padding-left: 5px; }
.ptabs .on { height: 21px; background: #fff; border-bottom: 0; padding: 0 8px 0 6px; gap: 5px; }
.pbody { flex: 1; min-height: 0; margin: -1px 1px 2px 0; border: 1px solid #a8a8a8; background: #fff; display: flex; flex-direction: column; padding: 3px 3px 0; }
.search { flex: none; height: 22px; display: flex; align-items: center; gap: 5px; }
.sbox { width: 172px; height: 22px; border: 1px solid #a0a0a0; display: flex; align-items: center; gap: 2px; padding-left: 1px; }
.sbox input { border: 0; padding: 0; min-width: 0; flex: 1; background: none; }
.sbox input::placeholder { color: #555; opacity: 1; }
.search .tri { border-width: 4px 4px 0; vertical-align: middle; margin: 0 3px 0 0; }
.search .sep { margin-left: 3px; background: #aaa; }
.plist { flex: 1; min-height: 0; display: flex; flex-direction: column; border: 1px solid #a8a8a8; border-bottom: 0; padding: 4px 2px 2px 3px; margin: 0 1px 0 0; }
.listbox { flex: none; border: 1px solid #666; }
.listrow { display: flex; height: 116px; }
.listclip { flex: 1; min-width: 0; overflow: hidden; }
.codes { width: 100%; table-layout: fixed; border-spacing: 0; }
.k1 { width: 80px; } .k2 { width: 79px; }
.codes th { font-weight: normal; text-align: left; height: 24px; padding: 0 0 0 5px; border-right: 1px solid #e0edfb; border-bottom: 1px solid #eef3fa; }
.codes td { height: 17px; padding: 1px 0 0 6px; white-space: nowrap; overflow: hidden; border-right: 1px solid #eee; border-bottom: 1px solid #eee; line-height: 15px; }
.codes td:first-child { padding: 1px 0 0 4px; }
.codes .sw { vertical-align: top; margin-right: 2px; height: 15px; }
.codes .cur td { background: #f5f5f5; }
.listbox .vscroll .thumb { margin-top: 13px; }
.listbox .hscroll { height: 17px; padding: 0 22px 0 5px; }
.listbox .hscroll .thumb { width: 196px; height: 15px; margin-left: 4px; }
.splitter { flex: none; height: 8px; background: #bfbfbf; display: flex; justify-content: center; padding-top: 1px; }
.splitter span { width: 103px; background: #f6f6f6; border: 1px solid #aaa; border-bottom: 0; display: flex; align-items: center; gap: 4px; padding: 0 5px; }
.splitter span i { flex: 1; border-top: 1px dotted #3c97e6; }
.pgrid { flex: 1; min-height: 0; border: 1px solid #2b90d9; display: flex; overflow: hidden; background: #f1faff; }
.prows { flex: 1; min-width: 0; background: #c3ecff; overflow: hidden; }
.cat { height: 19px; display: flex; align-items: center; border-bottom: 1px solid #7dc8f0; color: #0b78cf; padding-left: 4px; }
.cat button { width: 13px; height: 13px; border: 1px solid #2087d4; border-radius: 3px; background: linear-gradient(#0a68b8, #0a68b8) center / 7px 1px no-repeat, linear-gradient(#d4f2ff, #6ccbff); }
.cat b { margin-left: 21px; }
.pr { height: 19px; display: flex; margin-left: 18px; background: #f1faff; border-bottom: 1px solid #b9e6fc; border-left: 1px solid #b9e6fc; }
.pr .n { width: 119px; display: flex; align-items: center; gap: 2px; padding-left: 17px; border-right: 1px solid #b9e6fc; overflow: hidden; white-space: nowrap; flex: none; }
.pr .v { flex: 1; padding: 2px 2px 0 1px; overflow: hidden; white-space: nowrap; }
.pr .in { padding-left: 4px; }
.pr .mid { display: flex; justify-content: center; }
.v input { width: 15px; height: 15px; border: 1px solid #1d6fb8; border-radius: 2px; }
.bscroll { width: 17px; flex: none; display: flex; flex-direction: column; background: #eaf8ff; }
.bscroll button, .bthumb { display: flex; align-items: center; justify-content: center; width: 17px; height: 17px; background: linear-gradient(90deg, #5cc6ff, #149df0); border: 1px solid #1173c0; border-radius: 2px; }
.bthumb { height: 109px; margin-top: 1px; }
.bthumb i { width: 7px; height: 5px; border: 1px solid #fff; border-left: 0; border-right: 0; background: linear-gradient(#fff, #fff) center / 7px 1px no-repeat; }
.btabs { flex: none; display: flex; height: 24px; margin: 0 -3px; overflow: hidden; align-items: flex-start; border-top: 1px solid #a8a8a8; background: #fff; }
.arr { width: 17px; height: 22px; padding-left: 5px; background: #f0f0f0; color: #555; flex: none; }
.arr.dim { color: #aaa; }
.bt { display: flex; align-items: center; gap: 5px; height: 20px; border: 1px solid #a8a8a8; border-top: 0; padding: 0 0 0 4px; background: #eee; }
.bt.on { height: 22px; background: #fff; padding: 2px 8px 0 7px; margin-left: 3px; }
.arr.dim { width: 20px; }
.bt:last-child { border-left: 0; }

.results { flex: none; height: 28px; background: #fff; display: flex; padding: 2px 0 2px 4px; }
.results button { display: flex; align-items: center; gap: 7px; border: 1px solid #a8a8a8; background: linear-gradient(#f8f8f8, #e4e4e4); padding: 0 10px 0 4px; }
.results button:first-child { padding: 0 3px; border-right: 0; }
.status { flex: none; height: 24px; background: #f0f0f0; border-top: 1px solid #d5d5d5; display: flex; align-items: stretch; position: relative; }
.prog { width: 181px; margin: 2px 1px; border: 2px solid #a8a8a8; background: linear-gradient(#e6e6e6, #fff 50%, #e4e4e4); color: #2c8cf0; text-align: center; line-height: 17px; }
.status span { border-left: 1px solid #d0d0d0; padding-left: 2px; margin: 1px 0; line-height: 23px; }
.s1 { width: 184px; } .s2 { width: 55px; } .s3 { width: 153px; } .s4 { width: 104px; } .s5 { width: 154px; }
.status .s3 { padding-left: 0; }
.keys { display: flex; gap: 8px; color: #a0a0a0; }
.keys em { font-style: normal; }
.sizer { position: absolute; right: 0; bottom: 0; }
.taskbar { flex: none; height: 6px; padding: 4px 0 0 140px; display: flex; gap: 2px; border-bottom: 1px solid #4d7db8; }
.taskbar i { width: 60px; height: 1px; background: #5c88bb; }
.taskbar .act { background: #dfe9f5; }
```

FILE: app.js
```js
const rows = document.getElementById('rows');
const special = {
  1: { type: '0x0047 Large river (200 m', label: 'Буг', current: true },
  8: { label: 'Буг' },
  16: { label: 'Хвостосховище Стебницьк' }
};
for (let i = 0; i < 20; i++) {
  const row = special[i] || {};
  const tr = document.createElement('tr');
  if (row.current) tr.className = 'current';
  const marker = row.current ? '<svg width="8" height="9" viewBox="0 0 8 9"><path d="M2 1l4 3.500-4 3.500zM4 3v3" fill="none" stroke="#222" stroke-dasharray="1.500 .7"/></svg>' : '';
  tr.innerHTML = `<td>${marker}</td><td>${i}</td>
    <td class="type"><div><i class="sw"></i>${row.type || '0x003F Medium lake (11-2'}</div></td>
    <td>${row.label || ''}</td><td></td>
    <td class="ck"><input type="checkbox" class="tri3${i === 13 ? ' hot' : ''}" aria-label="Enable indexing, row ${i}"></td>
    <td></td><td></td><td></td>`;
  rows.appendChild(tr);
}
```
